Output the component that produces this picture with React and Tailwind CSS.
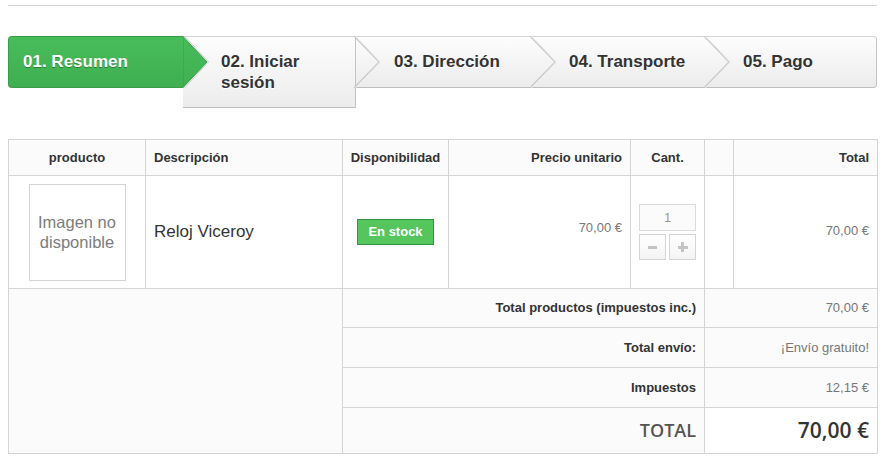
import React from 'react'

const steps = [
  { label: '01. Resumen', w: 'w-[175px]' },
  { label: '02. Iniciar sesión', w: 'w-[173px]' },
  { label: '03. Dirección', w: 'w-[175px]' },
  { label: '04. Transporte', w: 'w-[174px]' },
  { label: '05. Pago', w: 'w-[172px]' },
]

function Chevron() {
  return (
    <svg
      className="absolute left-full top-[-1px] z-10 -ml-[2px]"
      width="30"
      height="52"
      viewBox="0 0 30 52"
    >
      <polyline points="1,0 26,26 1,52" fill="none" stroke="#c9c9c9" strokeWidth="1.2" />
      <polyline points="2.5,0 27.5,26 2.5,52" fill="none" stroke="#ececec" strokeWidth="1" />
    </svg>
  )
}

function GreenArrow() {
  return (
    <svg className="absolute left-full top-[-1px] z-10" width="28" height="52" viewBox="0 0 28 52">
      <defs>
        <linearGradient id="g" x1="0" y1="0" x2="0" y2="1">
          <stop offset="0" stopColor="#47bb59" />
          <stop offset="1" stopColor="#3fb052" />
        </linearGradient>
      </defs>
      <polygon points="0,0.5 24,26 0,51.5" fill="url(#g)" stroke="#389c48" strokeWidth="1" />
      <polyline points="1.5,0 25.5,26 1.5,52" fill="none" stroke="#cfcfcf" strokeWidth="1" />
    </svg>
  )
}

function Steps() {
  return (
    <div className="flex items-start mt-[30px] text-[17px] leading-[21px] font-bold">
      {steps.map((s, i) => {
        if (i === 0) {
          return (
            <div
              key={s.label}
              className={`${s.w} relative h-[52px] shrink-0 rounded-l-[4px] border border-r-0 border-[#389c48] bg-gradient-to-b from-[#48bc5a] to-[#3faf51] pl-[14px] pt-[14px] text-white [text-shadow:0_1px_#2e7d3a]`}
            >
              {s.label}
              <GreenArrow />
            </div>
          )
        }
        const tall = i === 1
        const last = i === steps.length - 1
        return (
          <div
            key={s.label}
            className={`${s.w} relative shrink-0 border-t border-b border-t-[#d6d4d4] border-b-[#bdbdbd] bg-gradient-to-b from-[#fdfdfd] to-[#ececec] pl-[38px] pr-[12px] py-[14px] text-[#333] [text-shadow:0_1px_#fff] ${
              tall ? 'min-h-[72px] border-r border-r-[#c4c4c4]' : 'h-[52px]'
            } ${last ? 'rounded-r-[4px] border-r border-r-[#c4c4c4]' : ''}`}
          >
            {s.label}
            {!last && <Chevron />}
          </div>
        )
      })}
    </div>
  )
}

export default function App() {
  const bd = 'border border-[#d6d4d4]'
  return (
    <div className="w-[885px] px-[8px] pt-[5px] font-['Liberation_Sans',Arial,sans-serif] text-[13px] text-[#333] bg-white">
      <div className="border-t border-[#d6d4d4]" />
      <Steps />

      <table className="mt-[31px] w-[869px] table-fixed border-collapse">
        <colgroup>
          <col className="w-[137px]" />
          <col className="w-[197px]" />
          <col className="w-[106px]" />
          <col className="w-[182px]" />
          <col className="w-[74px]" />
          <col className="w-[29px]" />
          <col className="w-[144px]" />
        </colgroup>
        <thead>
          <tr className="h-[36px] bg-[#fbfbfb] font-bold">
            <th className={`${bd} text-center font-bold`}>producto</th>
            <th className={`${bd} px-[8px] text-left font-bold`}>Descripción</th>
            <th className={`${bd} text-center font-bold`}>Disponibilidad</th>
            <th className={`${bd} px-[8px] text-right font-bold`}>Precio unitario</th>
            <th className={`${bd} text-center font-bold`}>Cant.</th>
            <th className={bd}></th>
            <th className={`${bd} px-[8px] text-right font-bold`}>Total</th>
          </tr>
        </thead>
        <tbody>
          <tr className="h-[113px] bg-white">
            <td className={`${bd} align-middle`}>
              <div className="mx-auto flex h-[97px] w-[97px] flex-col items-center justify-center border border-[#d6d4d4] text-[16.5px] leading-[20px] text-[#7c7c7c]">
                <span>Imagen no</span>
                <span>disponible</span>
              </div>
            </td>
            <td className={`${bd} px-[8px] text-[17px]`}>Reloj Viceroy</td>
            <td className={`${bd} text-center`}>
              <span className="inline-flex h-[26px] w-[77px] items-center justify-center border border-[#36943e] bg-[#55c65e] font-bold text-white">
                En stock
              </span>
            </td>
            <td className={`${bd} px-[8px] pb-[9px] text-right text-[#777]`}>70,00 €</td>
            <td className={bd}>
              <div className="mx-auto flex w-[57px] flex-col gap-[3px]">
                <div className="flex h-[27px] items-center justify-center border border-[#dbdbdb] bg-[#fbfbfb] text-[#9c9b9b]">
                  1
                </div>
                <div className="flex gap-[3px]">
                  <span className="flex h-[26px] w-[27px] items-center justify-center border border-[#d6d4d4] bg-gradient-to-b from-white to-[#f4f4f4]">
                    <span className="h-[3px] w-[9px] bg-[#c4c4c4]" />
                  </span>
                  <span className="relative flex h-[26px] w-[27px] items-center justify-center border border-[#d6d4d4] bg-gradient-to-b from-white to-[#f4f4f4]">
                    <span className="h-[3px] w-[10px] bg-[#c4c4c4]" />
                    <span className="absolute h-[10px] w-[3px] bg-[#c4c4c4]" />
                  </span>
                </div>
              </div>
            </td>
            <td className={bd}></td>
            <td className={`${bd} px-[8px] pb-[3px] text-right text-[#777]`}>70,00 €</td>
          </tr>

          <tr className="h-[39px]">
            <td className={`${bd} bg-[#fbfbfb]`} colSpan={2} rowSpan={4}></td>
            <td className={`${bd} bg-[#fbfbfb] px-[8px] text-right font-bold`} colSpan={3}>
              Total productos (impuestos inc.)
            </td>
            <td className={`${bd} bg-[#fbfbfb] px-[8px] text-right text-[#777]`} colSpan={2}>
              70,00 €
            </td>
          </tr>
          <tr className="h-[40px]">
            <td className={`${bd} bg-[#fbfbfb] px-[8px] text-right font-bold`} colSpan={3}>
              Total envío:
            </td>
            <td className={`${bd} bg-[#fbfbfb] px-[8px] text-right text-[#777]`} colSpan={2}>
              ¡Envío gratuito!
            </td>
          </tr>
          <tr className="h-[40px]">
            <td className={`${bd} bg-[#fbfbfb] px-[8px] text-right font-bold`} colSpan={3}>
              Impuestos
            </td>
            <td className={`${bd} bg-[#fbfbfb] px-[8px] text-right text-[#777]`} colSpan={2}>
              12,15 €
            </td>
          </tr>
          <tr className="h-[46px]">
            <td
              className={`${bd} bg-[#fbfbfb] px-[8px] text-right font-['Open_Sans',sans-serif] text-[18px] font-semibold text-[#555454]`}
              colSpan={3}
            >
              TOTAL
            </td>
            <td
              className={`${bd} bg-white px-[8px] text-right font-['Open_Sans',sans-serif] text-[21px] font-semibold text-[#333]`}
              colSpan={2}
            >
              70,00 €
            </td>
          </tr>
        </tbody>
      </table>
    </div>
  )
}
